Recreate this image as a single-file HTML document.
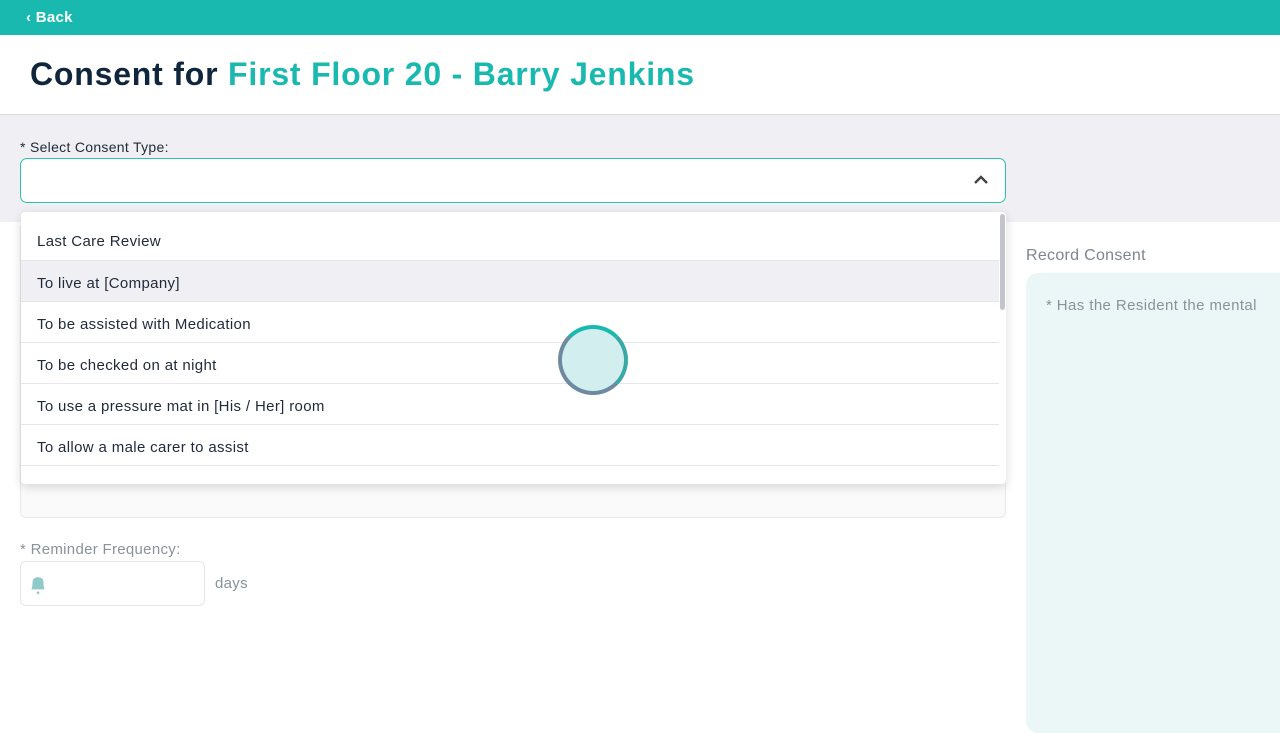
<!DOCTYPE html>
<html><head><meta charset="utf-8"><style>
*{box-sizing:border-box;margin:0;padding:0}
body{width:1280px;height:720px;overflow:hidden;background:#fff;font-family:"Liberation Sans",sans-serif;position:relative}
.top{position:absolute;left:0;top:0;width:1280px;height:35px;background:#1ab9b0;color:#fff;font-weight:bold;font-size:15px;padding:9px 0 0 26px;letter-spacing:.3px}
h1{position:absolute;left:30px;top:56px;font-size:32px;font-weight:bold;color:#10263c;letter-spacing:0.8px;white-space:nowrap}
h1 span{color:#1ab9b0}
.band{position:absolute;left:0;top:114px;width:1280px;height:108px;background:#f0f0f4;border-top:1px solid #ddd}
.lbl{position:absolute;left:20px;top:139px;font-size:14px;color:#1f2a36;letter-spacing:.3px}
.sel{position:absolute;left:20px;top:158px;width:986px;height:45px;background:#fff;border:1.5px solid #2cc0ad;border-radius:7px}
.sel svg{position:absolute;right:16px;top:15px}
.box{position:absolute;left:20px;top:222px;width:986px;height:296px;background:#fafafa;border:1px solid #e8e8e8;border-radius:6px}
.dd{position:absolute;left:21px;top:212px;width:985px;height:272px;background:#fff;border-radius:4px;box-shadow:0 3px 10px rgba(0,0,0,.15);overflow:hidden}
.opt{height:41px;border-bottom:1px solid #e6e6ea;font-size:15px;color:#1f2a3a;padding:14px 16px 0;width:978px;letter-spacing:.35px}
.opt.h{background:#f0f0f4}
.sb{position:absolute;right:1px;top:2px;width:5px;height:96px;background:#c4c4cc;border-radius:3px}
.circ{position:absolute;left:558px;top:325px;width:70px;height:70px;border-radius:50%;border:4px solid #1ab9b0;border-bottom-color:#6e8aa0;border-left-color:#6e8aa0;border-right-color:#3aa8a4;background:#d2eeee}
.rf{position:absolute;left:20px;top:541px;font-size:15px;color:#8a929c;letter-spacing:.3px}
.inp{position:absolute;left:20px;top:561px;width:185px;height:45px;border:1px solid #e6e6e6;border-radius:6px;background:#fff}
.days{position:absolute;left:215px;top:575px;font-size:15px;color:#8a929c;letter-spacing:.3px}
.rc{position:absolute;left:1026px;top:247px;font-size:16px;color:#7d8690;letter-spacing:.3px}
.panel{position:absolute;left:1026px;top:273px;width:270px;height:460px;background:#ebf7f7;border-radius:12px}
.panel div{position:absolute;left:20px;top:24px;font-size:15px;color:#8a929c;white-space:nowrap;letter-spacing:.4px}
</style></head><body>
<div class="top">&lsaquo; Back</div>
<h1>Consent for <span>First Floor 20 - Barry Jenkins</span></h1>
<div class="band"></div>
<div class="lbl">* Select Consent Type:</div>
<div class="sel"><svg width="16" height="12" viewBox="0 0 16 12"><path d="M2 9 L8 3 L14 9" fill="none" stroke="#444" stroke-width="2.4"/></svg></div>
<div class="box"></div>
<div class="dd">
<div class="opt" style="height:49px;padding-top:21px">Last Care Review</div>
<div class="opt h">To live at [Company]</div>
<div class="opt">To be assisted with Medication</div>
<div class="opt">To be checked on at night</div>
<div class="opt">To use a pressure mat in [His / Her] room</div>
<div class="opt">To allow a male carer to assist</div>
<div class="opt"></div>
<div class="sb"></div>
</div>
<div class="circ"></div>
<div class="rf">* Reminder Frequency:</div>
<div class="inp"><svg style="position:absolute;left:8px;top:12px" width="18" height="22" viewBox="0 0 16 20"><path d="M2 14 Q3 12 3 8 Q3 3 8 3 Q13 3 13 8 Q13 12 14 14 Z" fill="#8fc9c9"/><circle cx="8" cy="17" r="1.2" fill="#8fc9c9"/></svg></div>
<div class="days">days</div>
<div class="rc">Record Consent</div>
<div class="panel"><div>* Has the Resident the mental</div></div>
</body></html>
